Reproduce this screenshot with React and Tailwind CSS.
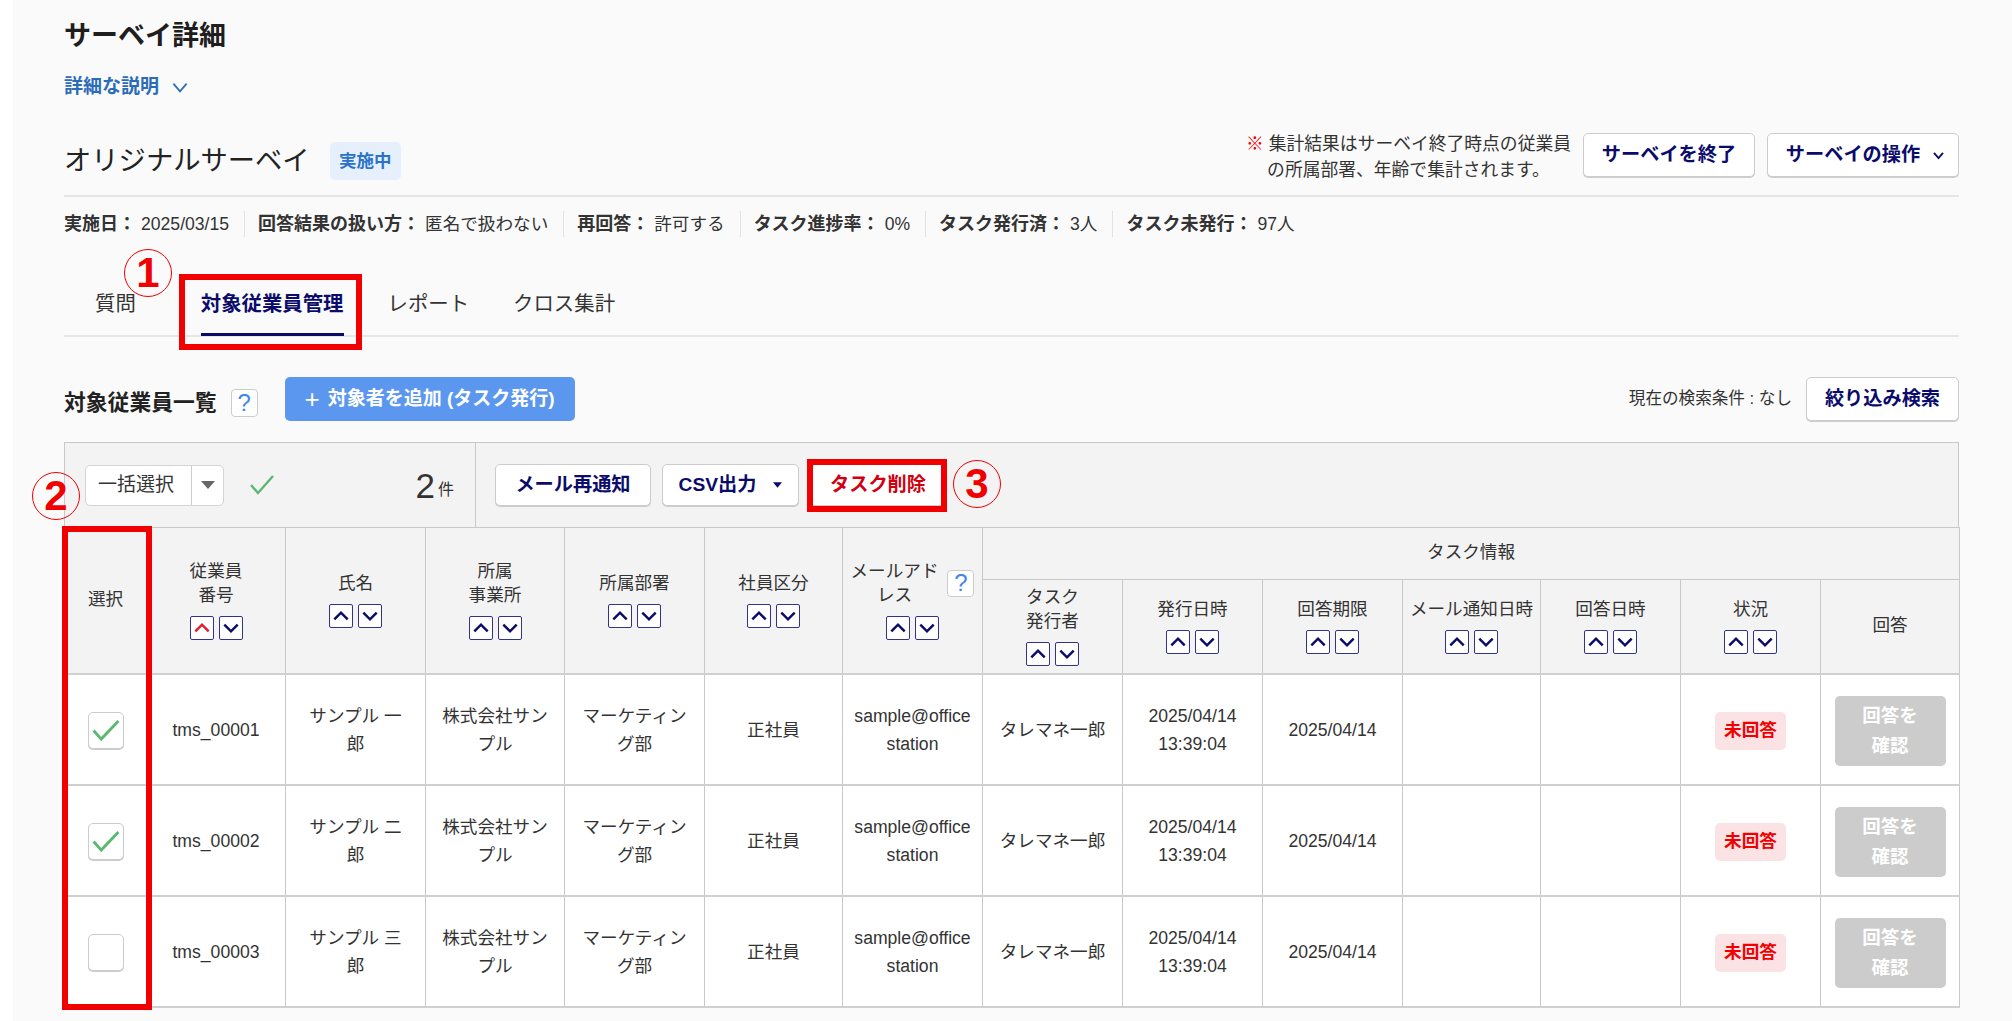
import React from 'react';

const rows = [
  { id: 'tms_00001', name: 'サンプル 一\n郎', checked: true },
  { id: 'tms_00002', name: 'サンプル 二\n郎', checked: true },
  { id: 'tms_00003', name: 'サンプル 三\n郎', checked: false },
];

const meta = [
  ['実施日：', '2025/03/15'],
  ['回答結果の扱い方：', '匿名で扱わない'],
  ['再回答：', '許可する'],
  ['タスク進捗率：', '0%'],
  ['タスク発行済：', '3人'],
  ['タスク未発行：', '97人'],
];

const Arrow = ({ up, red }) => (
  <span className="flex h-[24px] w-[24px] items-center justify-center rounded-[2px] border border-[#33338f] bg-white">
    <svg viewBox="0 0 24 24" className="h-[20px] w-[20px]" fill="none" stroke={red ? '#e0202c' : '#0b0b6b'} strokeWidth="3">
      <path d={up ? 'M4 16 L12 8 L20 16' : 'M4 8 L12 16 L20 8'} />
    </svg>
  </span>
);

const Sort = ({ red }) => (
  <div className="mt-2 flex justify-center gap-[5px]">
    <Arrow up red={red} />
    <Arrow />
  </div>
);

const Help = ({ className }) => (
  <span className={`flex items-center justify-center rounded-[4px] border border-[#ccc] bg-white text-[24px] text-[#3f87e8] ${className}`}>?</span>
);

const Btn = ({ children, className }) => (
  <button className={`flex items-center justify-center rounded-[5px] border border-[#ccc] bg-white text-[19.2px] font-bold text-[#0b0b6b] shadow-[0_1px_0_#ccc] ${className}`}>
    {children}
  </button>
);

const Circle = ({ n, className }) => (
  <div className={`absolute flex h-[48px] w-[48px] items-center justify-center rounded-full border-[1.5px] border-[#f00000] text-[42px] leading-none font-bold text-[#f00000] ${className}`}>
    {n}
  </div>
);

const Th = ({ children, sort, red, ...props }) => (
  <th className="border border-[#c8c8c8] bg-[#f3f3f3] px-1 pb-[2px] align-middle font-normal" {...props}>
    <div className="whitespace-pre-line">{children}</div>
    {sort && <Sort red={red} />}
  </th>
);

const Td = ({ children }) => (
  <td className="border-x border-y-2 border-x-[#c8c8c8] border-y-[#d0d0d0] bg-white pt-[3px] text-center align-middle leading-[27.5px] whitespace-pre-line">
    {children}
  </td>
);

const App = () => {
  return (
    <div className="relative h-[1021px] w-[2012px] overflow-hidden bg-white pl-[13px] text-[17.6px] text-[#333] [font-family:'Liberation_Sans','Noto_Sans_CJK_JP',sans-serif]">
      <div className="h-full bg-[#fafafa] pt-[18px] pr-[53px] pl-[51px]">
        <h1 className="h-[36px] text-[27px] leading-[36px] font-bold text-[#1e1e1e]">サーベイ詳細</h1>
        <div className="mt-[18px] flex h-[30px] items-center gap-[13px] text-[19px] font-bold text-[#2b6cb8]">
          詳細な説明
          <svg viewBox="0 0 14 10" className="h-[11px] w-[16px]" fill="none" stroke="#2b6cb8" strokeWidth="1.6">
            <path d="M1 1.5 L7 8.5 L13 1.5" />
          </svg>
        </div>

        <div className="mt-[31px] flex h-[64px] items-start justify-between border-b-2 border-[#e6e6e6]">
          <div className="mt-[9px] flex items-center gap-[20px]">
            <span className="text-[27.3px] leading-[38px] text-[#222]">オリジナルサーベイ</span>
            <span className="flex h-[38px] w-[71px] items-center justify-center rounded-[5px] bg-[#e6f0fd] text-[17.5px] font-bold text-[#2a73c9]">実施中</span>
          </div>
          <div className="flex h-[44px] items-center">
            <p className="mt-[3px] text-center text-[17.8px] leading-[26px]">
              <span className="text-[#f00000]">※</span> 集計結果はサーベイ終了時点の従業員
              <br />
              の所属部署、年齢で集計されます。
            </p>
            <Btn className="ml-[12px] h-[44px] w-[172px]">サーベイを終了</Btn>
            <Btn className="ml-[12px] h-[44px] w-[192px] gap-[11px] pl-[6px]">
              サーベイの操作
              <svg viewBox="0 0 14 10" className="h-[9px] w-[15px]" fill="none" stroke="#0b0b6b" strokeWidth="2">
                <path d="M2 2 L7 8 L12 2" />
              </svg>
            </Btn>
          </div>
        </div>

        <div className="mt-[14px] flex h-[26px] items-center">
          {meta.map(([label, value], i) => (
            <div key={label} className={`flex h-full items-center pr-[15px] ${i > 0 ? 'pl-[13px]' : ''} ${i < meta.length - 1 ? 'border-r border-[#e2e2e2]' : ''}`}>
              <b className="text-[18px]">{label}</b>
              <span className="ml-[5px]">{value}</span>
            </div>
          ))}
        </div>

        <div className="mt-[46px] flex h-[54px] items-start border-b-2 border-[#e6e6e6] text-[20.4px]">
          <span className="mr-[65px] ml-[31px] leading-[42px]">質問</span>
          <span className="mr-[44px] h-[53px] border-b-[3px] border-[#0a0a66] leading-[42px] font-bold text-[#0b0b6b]">対象従業員管理</span>
          <span className="mr-[44px] leading-[42px]">レポート</span>
          <span className="leading-[42px]">クロス集計</span>
        </div>

        <div className="mt-[40px] flex h-[44px] items-center">
          <h2 className="mt-[8px] text-[21.8px] font-bold text-[#222]">対象従業員一覧</h2>
          <Help className="mt-[8px] ml-[14px] h-[28px] w-[27px]" />
          <button className="ml-[27px] flex h-[44px] w-[290px] items-center justify-center gap-[8px] rounded-[5px] bg-[#5b97ef] text-[19px] font-bold text-white">
            <span className="text-[26px] leading-none font-normal">+</span>
            対象者を追加 (タスク発行)
          </button>
          <span className="mr-[14px] ml-auto text-[16.6px]">現在の検索条件 : なし</span>
          <Btn className="h-[44px] w-[153px]">絞り込み検索</Btn>
        </div>

        <div className="mt-[21px] flex h-[85px] border border-b-0 border-[#c8c8c8] bg-[#f3f3f3]">
          <div className="flex w-[411px] shrink-0 items-center border-r border-[#c8c8c8] pr-[21px] pl-[20px]">
            <div className="flex h-[41px] w-[139px] items-center rounded-[5px] border border-[#d4d4d4] bg-white text-[19px]">
              <span className="w-[105px] pr-[5px] text-center">一括選択</span>
              <span className="flex h-full flex-1 items-center justify-center border-l border-[#ccc]">
                <svg viewBox="0 0 14 8" className="h-[8px] w-[14px]">
                  <polygon points="0,0 14,0 7,8" fill="#666" />
                </svg>
              </span>
            </div>
            <svg viewBox="0 0 24 20" className="ml-[26px] h-[20px] w-[24px]" fill="none" stroke="#5cb870" strokeWidth="2.4">
              <path d="M1 10 L8 18 L23 1" />
            </svg>
            <span className="ml-auto text-[35px] leading-none">2</span>
            <span className="mt-[9px] ml-[3px] text-[16px]">件</span>
          </div>
          <div className="flex items-center pl-[19px]">
            <Btn className="h-[42px] w-[156px]">メール再通知</Btn>
            <Btn className="ml-[11px] h-[42px] w-[137px] gap-[17px]">
              CSV出力
              <svg viewBox="0 0 10 6" className="h-[6px] w-[9px]">
                <polygon points="0,0 10,0 5,6" fill="#0b0b6b" />
              </svg>
            </Btn>
            <Btn className="ml-[11px] h-[42px] w-[136px] text-[#d00010]">タスク削除</Btn>
          </div>
        </div>

        <table className="w-[1895px] table-fixed border-collapse text-[17.6px] leading-[24.5px]">
          <colgroup>
            <col className="w-[82px]" />
            <col className="w-[139px]" />
            <col className="w-[140px]" />
            <col className="w-[139px]" />
            <col className="w-[140px]" />
            <col className="w-[138px]" />
            <col className="w-[140px]" />
            <col className="w-[140px]" />
            <col className="w-[140px]" />
            <col className="w-[140px]" />
            <col className="w-[138px]" />
            <col className="w-[140px]" />
            <col className="w-[140px]" />
            <col className="w-[139px]" />
          </colgroup>
          <thead>
            <tr className="h-[52px]">
              <Th rowSpan={2}>選択</Th>
              <Th rowSpan={2} sort red>{'従業員\n番号'}</Th>
              <Th rowSpan={2} sort>氏名</Th>
              <Th rowSpan={2} sort>{'所属\n事業所'}</Th>
              <Th rowSpan={2} sort>所属部署</Th>
              <Th rowSpan={2} sort>社員区分</Th>
              <th rowSpan={2} className="border border-[#c8c8c8] bg-[#f3f3f3] pb-[2px] align-middle font-normal">
                <div className="flex items-center justify-center gap-[9px]">
                  <span className="whitespace-pre-line">{'メールアド\nレス'}</span>
                  <Help className="h-[27px] w-[27px]" />
                </div>
                <Sort />
              </th>
              <Th colSpan={7}>タスク情報</Th>
            </tr>
            <tr className="h-[94px]">
              <Th sort>{'タスク\n発行者'}</Th>
              <Th sort>発行日時</Th>
              <Th sort>回答期限</Th>
              <Th sort>メール通知日時</Th>
              <Th sort>回答日時</Th>
              <Th sort>状況</Th>
              <Th>回答</Th>
            </tr>
          </thead>
          <tbody>
            {rows.map((row) => (
              <tr key={row.id} className="h-[111px]">
                <Td>
                  <span className="mx-auto flex h-[37px] w-[36px] items-center justify-center rounded-[5px] border border-[#ccc] bg-white shadow-[0_1px_0_#ccc]">
                    {row.checked && (
                      <svg viewBox="0 0 28 22" className="h-[21px] w-[28px]" fill="none" stroke="#5cb870" strokeWidth="3">
                        <path d="M1 11 L9 20 L27 1" />
                      </svg>
                    )}
                  </span>
                </Td>
                <Td>{row.id}</Td>
                <Td>{row.name}</Td>
                <Td>{'株式会社サン\nプル'}</Td>
                <Td>{'マーケティン\nグ部'}</Td>
                <Td>正社員</Td>
                <Td>{'sample@office\nstation'}</Td>
                <Td>タレマネ一郎</Td>
                <Td>{'2025/04/14\n13:39:04'}</Td>
                <Td>2025/04/14</Td>
                <Td />
                <Td />
                <Td>
                  <span className="mx-auto flex h-[38px] w-[71px] items-center justify-center rounded-[5px] bg-[#fbe3e5] font-bold text-[#f00000]">未回答</span>
                </Td>
                <Td>
                  <span className="mx-auto block h-[70px] w-[111px] rounded-[5px] bg-[#ccc] py-[5px] text-[18.5px] leading-[30px] font-bold text-white">
                    {'回答を\n確認'}
                  </span>
                </Td>
              </tr>
            ))}
          </tbody>
        </table>
      </div>

      <div className="absolute top-[274px] left-[179px] h-[76px] w-[183px] border-[6px] border-[#f00000]" />
      <div className="absolute top-[526px] left-[62px] h-[484px] w-[90px] border-[6px] border-[#f00000]" />
      <div className="absolute top-[459px] left-[807px] h-[53px] w-[140px] border-[6px] border-[#f00000]" />
      <Circle n="1" className="top-[249px] left-[124px]" />
      <Circle n="2" className="top-[472px] left-[32px]" />
      <Circle n="3" className="top-[460px] left-[953px]" />
    </div>
  );
};

export default App;
